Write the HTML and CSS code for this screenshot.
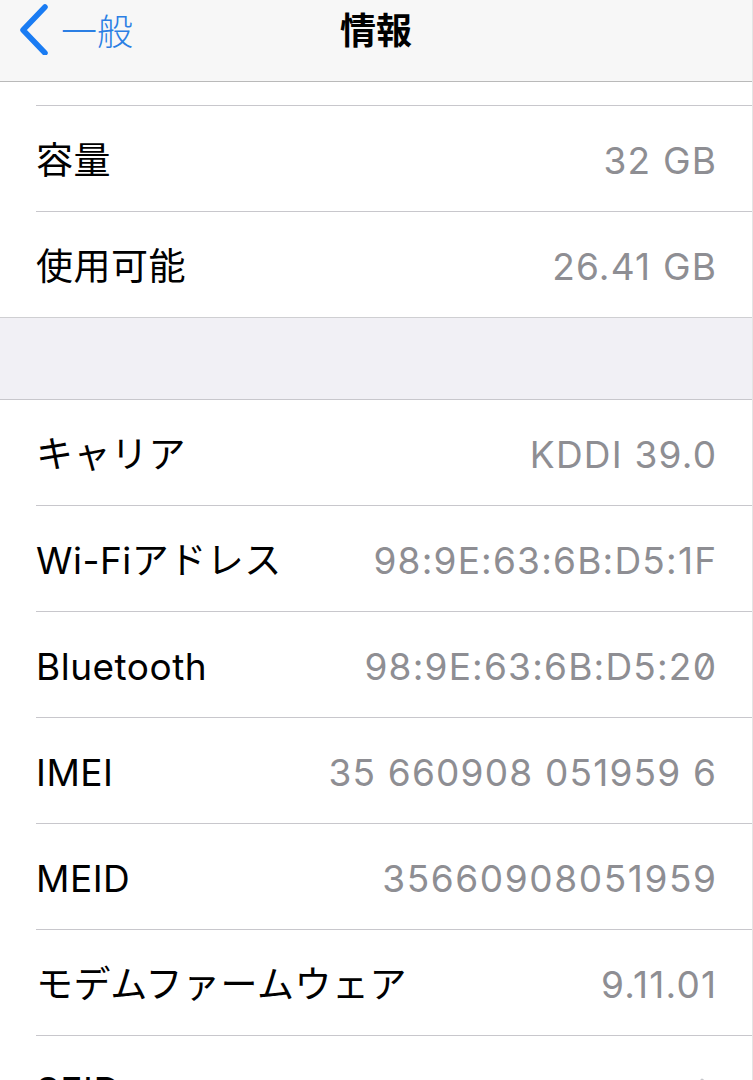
FILE: index.html
```html
<!DOCTYPE html>
<html lang="ja">
<head>
<meta charset="utf-8">
<title>情報</title>
<link rel="stylesheet" href="styles.css">
</head>
<body>
<div class="page">
  <header class="nav">
    <div class="back">
      <svg class="chev" width="34" height="52" viewBox="0 0 34 52" aria-hidden="true">
        <path d="M28 4 L6 27 L28 50" fill="none" stroke="#1a7cf3" stroke-width="5.5" stroke-linecap="round" stroke-linejoin="round"/>
      </svg>
      <span class="back-label">一般</span>
    </div>
    <h1 class="title">情報</h1>
    <div class="spacer"></div>
  </header>

  <section class="group group-first">
    <div class="row row-partial"><div class="row-inner"></div></div>
    <div class="row"><div class="row-inner"><span class="label">容量</span><span class="value">32 GB</span></div></div>
    <div class="row row-last"><div class="row-inner"><span class="label">使用可能</span><span class="value">26.41 GB</span></div></div>
  </section>

  <div class="gap"></div>

  <section class="group group-second">
    <div class="row"><div class="row-inner"><span class="label">キャリア</span><span class="value">KDDI 39.0</span></div></div>
    <div class="row"><div class="row-inner"><span class="label">Wi-Fiアドレス</span><span class="value">98:9E:63:6B:D5:1F</span></div></div>
    <div class="row"><div class="row-inner"><span class="label">Bluetooth</span><span class="value">98:9E:63:6B:D5:2<span class="slashed">0</span></span></div></div>
    <div class="row"><div class="row-inner"><span class="label">IMEI</span><span class="value">35 660908 051959 6</span></div></div>
    <div class="row"><div class="row-inner"><span class="label">MEID</span><span class="value wide">35660908051959</span></div></div>
    <div class="row"><div class="row-inner"><span class="label">モデムファームウェア</span><span class="value">9.11.01</span></div></div>
    <div class="row"><div class="row-inner"><span class="label">SEID</span>
      <svg class="disclosure" width="14" height="24" viewBox="0 0 14 24" aria-hidden="true">
        <path d="M2 2 L12 12 L2 22" fill="none" stroke="#c7c7cc" stroke-width="3" stroke-linecap="round" stroke-linejoin="round"/>
      </svg>
    </div></div>
  </section>
</div>
</body>
</html>
```

FILE: styles.css
```css
html, body {
  margin: 0;
  padding: 0;
  background: #ffffff;
}

body {
  width: 753px;
  height: 1080px;
  overflow: hidden;
  font-family: "Inter", "Noto Sans CJK JP", sans-serif;
  -webkit-font-smoothing: antialiased;
}

.page {
  width: 752px;
  height: 1080px;
  border-right: 1px solid #e4e4e4;
  overflow: hidden;
}

.nav {
  height: 81px;
  background: #f7f7f7;
  border-bottom: 1px solid #b9b9b9;
  display: grid;
  grid-template-columns: 1fr auto 1fr;
  align-items: start;
}

.back {
  display: flex;
  align-items: center;
  height: 58px;
  padding-left: 17px;
  gap: 10px;
}

.chev {
  display: block;
}

.back-label {
  font-family: "Noto Sans CJK JP", sans-serif;
  font-size: 36px;
  font-weight: 300;
  color: #2b7fe4;
  line-height: 1;
}

.title {
  margin: 0;
  height: 56px;
  display: flex;
  align-items: center;
  font-family: "Noto Sans CJK JP", sans-serif;
  font-size: 36px;
  font-weight: 700;
  color: #000;
  line-height: 1;
}

.group {
  background: #fff;
}

.group-first {
  border-bottom: 1px solid #cfcfd2;
}

.group-second {
  border-top: 1px solid #c8c7cc;
}

.gap {
  height: 81px;
  background: #f1f0f5;
}

.row {
  padding-left: 36px;
}

.row-inner {
  border-bottom: 1px solid #c8c7cc;
  display: flex;
  align-items: center;
  justify-content: space-between;
  padding-right: 36px;
  padding-top: 3px;
  box-sizing: border-box;
  height: 106px;
}

.row-partial .row-inner {
  height: 24px;
  padding-top: 0;
}

.row-last .row-inner {
  height: 105px;
  border-bottom: none;
}

.label {
  font-size: 37px;
  color: #000;
  line-height: 1;
  letter-spacing: 0.5px;
}

.value {
  font-size: 37px;
  color: #8e8e93;
  line-height: 1;
  letter-spacing: 1.2px;
  margin-right: -1.2px;
}

.value.wide {
  letter-spacing: 1.6px;
  margin-right: -1.6px;
}

.slashed {
  font-feature-settings: "zero" 1;
}

.disclosure {
  display: block;
  margin-right: 2px;
}
```
